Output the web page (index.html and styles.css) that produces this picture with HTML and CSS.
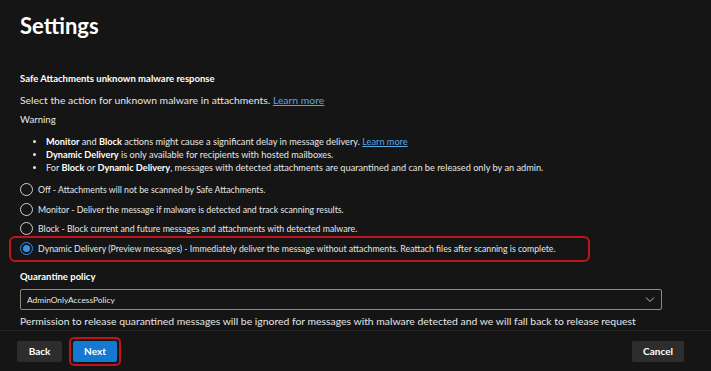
FILE: index.html
```html
<!DOCTYPE html>
<html>
<head>
<meta charset="utf-8">
<link rel="stylesheet" href="styles.css">
</head>
<body>
<div class="page">
  <main class="content">
    <h1 class="title">Settings</h1>
    <div class="label">Safe Attachments unknown malware response</div>
    <div class="desc">Select the action for unknown malware in attachments. <a class="link" href="#">Learn more</a></div>
    <div class="warning">Warning</div>
    <ul class="bullets">
      <li><b>Monitor</b> and <b>Block</b> actions might cause a significant delay in message delivery. <a class="link" href="#">Learn more</a></li>
      <li><b>Dynamic Delivery</b> is only available for recipients with hosted mailboxes.</li>
      <li>For <b>Block</b> or <b>Dynamic Delivery</b>, messages with detected attachments are quarantined and can be released only by an admin.</li>
    </ul>
    <div class="radios">
      <div class="radio"><span class="circle"></span><span>Off - Attachments will not be scanned by Safe Attachments.</span></div>
      <div class="radio"><span class="circle"></span><span>Monitor - Deliver the message if malware is detected and track scanning results.</span></div>
      <div class="radio"><span class="circle"></span><span>Block - Block current and future messages and attachments with detected malware.</span></div>
      <div class="radio selected"><span class="circle"><span class="dot"></span></span><span>Dynamic Delivery (Preview messages) - Immediately deliver the message without attachments. Reattach files after scanning is complete.</span><span class="highlight"></span></div>
    </div>
    <div class="label qlabel">Quarantine policy</div>
    <div class="select">
      <span>AdminOnlyAccessPolicy</span>
      <svg class="chevron" width="10" height="7" viewBox="0 0 10 7"><path d="M1 1.5 L5 5.5 L9 1.5" fill="none" stroke="#bdbdbd" stroke-width="1"/></svg>
    </div>
    <div class="note">Permission to release quarantined messages will be ignored for messages with malware detected and we will fall back to release request</div>
  </main>
  <footer class="footer">
    <div class="left">
      <button class="btn">Back</button>
      <span class="next-wrap"><button class="btn primary">Next</button></span>
    </div>
    <button class="btn">Cancel</button>
  </footer>
</div>
</body>
</html>
```

FILE: styles.css
```css
* { box-sizing: border-box; }
html, body { margin: 0; padding: 0; }
body {
  background: #151515;
  color: #ececec;
  font-family: Lato, "Open Sans", sans-serif;
  width: 711px;
  height: 371px;
  overflow: hidden;
}
.page { display: flex; flex-direction: column; height: 371px; }
.content { padding: 0 20px; height: 330px; overflow: hidden; }
.title {
  margin: 0;
  padding-top: 11px;
  font-size: 22px;
  line-height: 30px;
  font-weight: 700;
  color: #fff;
}
.label {
  margin-top: 28px;
  font-size: 9.5px;
  line-height: 20px;
  font-weight: 700;
  color: #fff;
}
.desc {
  font-size: 10.4px;
  line-height: 22px;
  color: #e6e6e6;
}
.link { color: #5aa6e0; text-decoration: underline; }
.warning {
  font-size: 9.6px;
  line-height: 18px;
  color: #e6e6e6;
}
.bullets {
  margin: 6px 0 0;
  padding-left: 26px;
  font-size: 9.2px;
  line-height: 13px;
  color: #e6e6e6;
}
.bullets b { color: #fff; }
.radios { margin-top: 6px; font-size: 8.75px; color: #e6e6e6; }
.radio {
  position: relative;
  display: flex;
  align-items: center;
  gap: 5px;
  height: 19.5px;
}
.circle {
  width: 13px; height: 13px;
  border: 1px solid #d0d0d0;
  border-radius: 50%;
  display: flex; align-items: center; justify-content: center;
  flex: none;
}
.selected .circle { border-color: #3a8fe0; }
.dot { width: 7px; height: 7px; border-radius: 50%; background: #3a8fe0; }
.highlight {
  position: absolute;
  left: -11px; top: -3px; bottom: -4px;
  width: 581px;
  border: 2px solid #c0141c;
  border-radius: 6px;
}
.qlabel { margin-top: 9px; }
.select {
  margin-top: 2px;
  height: 21px;
  width: 642px;
  border: 1px solid #8a8a8a;
  border-radius: 2px;
  display: flex; align-items: center; justify-content: space-between;
  padding: 0 6px 0 6px;
  font-size: 8.4px;
  color: #e6e6e6;
}
.note {
  font-size: 10.4px;
  line-height: 22px;
  color: #e6e6e6;
  white-space: nowrap;
}
.footer {
  border-top: 1px solid #262626;
  display: flex; justify-content: space-between; align-items: center;
  padding: 0 27px 0 17px;
  height: 41px;
}
.left { display: flex; align-items: center; gap: 11px; }
.btn {
  font-family: inherit;
  font-size: 10px;
  font-weight: 700;
  color: #fff;
  background: #2d2d2d;
  border: none;
  border-radius: 2px;
  height: 21px;
  padding: 0 11px;
  min-width: 45px;
}
.next-wrap {
  display: inline-flex;
  padding: 2px;
  border: 2px solid #c0141c;
  border-radius: 5px;
  margin: 0 -4px;
}
.primary { background: #1479d1; min-width: 44px; }
```
